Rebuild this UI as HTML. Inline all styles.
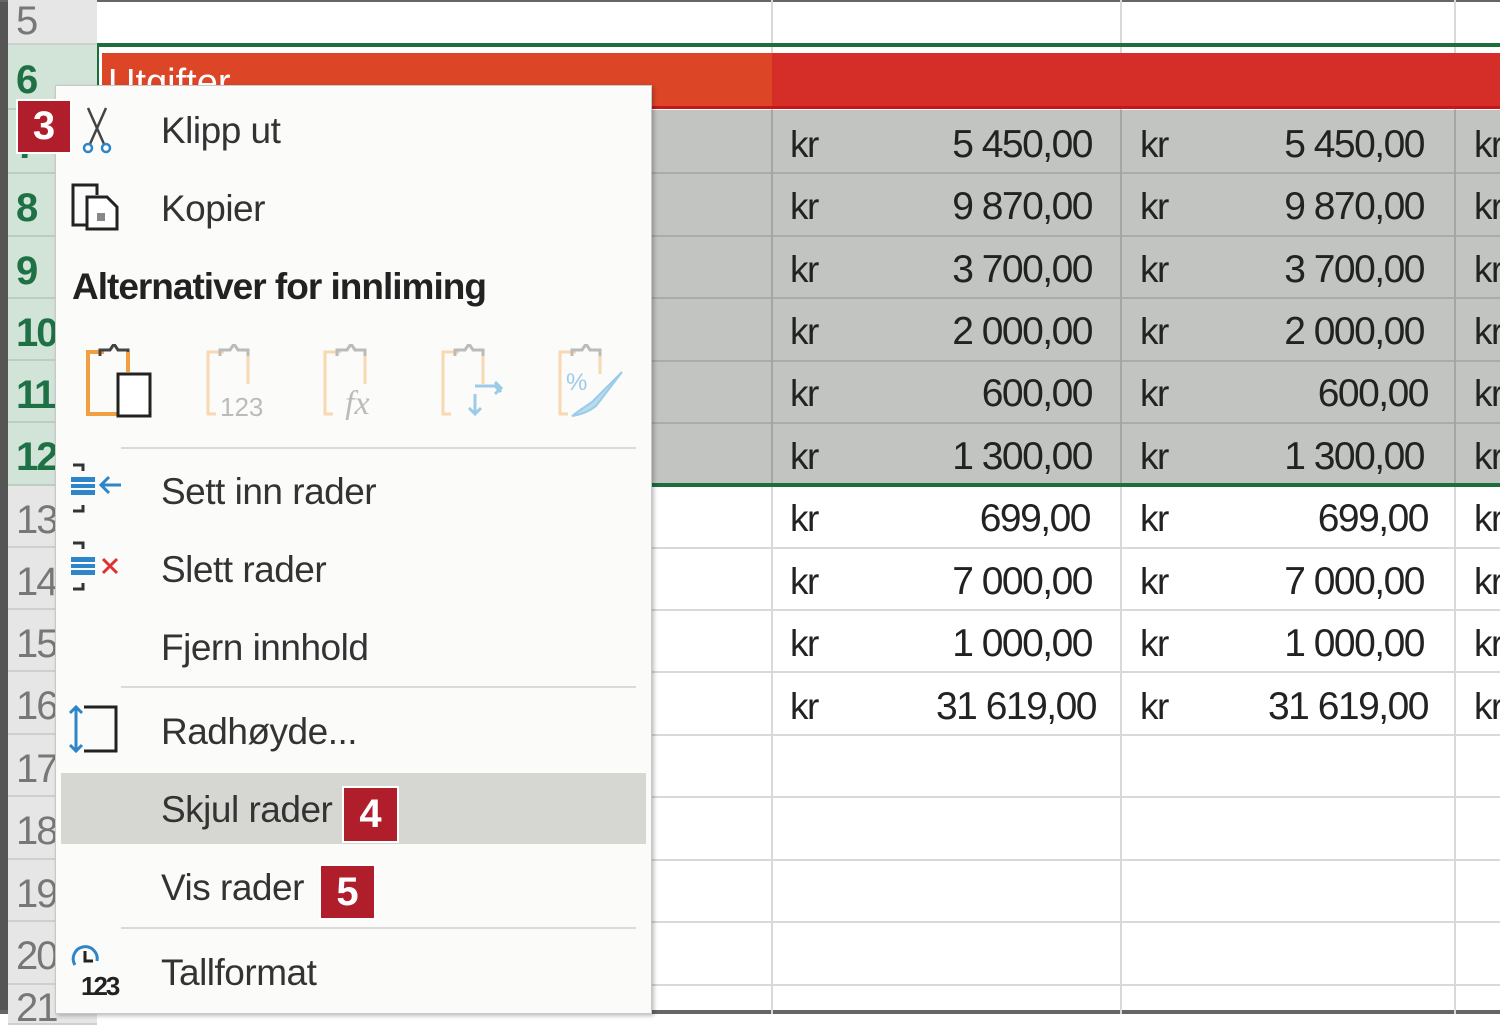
<!DOCTYPE html>
<html><head><meta charset="utf-8"><style>
*{margin:0;padding:0;box-sizing:border-box}
body{width:1500px;height:1014px;overflow:hidden;background:#fff;position:relative;font-family:"Liberation Sans",sans-serif}
.a{position:absolute}
.rh{position:absolute;left:8px;width:89px;background:#e6e6e6;border-bottom:2px solid #cfcfcf;color:#777;font-size:40px;padding-left:8px;padding-top:8px;display:flex;align-items:center;letter-spacing:-2px}
.rh.s{background:#d2e3d8;color:#1e7145;font-weight:bold;border-bottom-color:#b9cfc1}
.hl{position:absolute;left:97px;right:0;height:2px;background:#d9d9d9}
.vl{position:absolute;top:0;bottom:0;width:2px;background:#d9d9d9}
.kr{position:absolute;font-size:37px;color:#222;letter-spacing:-1.5px}
.num{position:absolute;font-size:39px;color:#222;letter-spacing:-1.5px;text-align:right}
.menu{position:absolute;left:55px;top:85px;width:597px;height:929px;background:#fbfbfa;border:1px solid #c8c8c8;box-shadow:2px 2px 4px rgba(0,0,0,.25)}
.mi{position:absolute;left:105px;font-size:37px;color:#333;letter-spacing:-0.5px}
.sep{position:absolute;left:65px;width:515px;height:2px;background:#dadada}
.badge{position:absolute;background:#b01e2b;color:#fff;font-weight:bold;font-size:40px;display:flex;align-items:center;justify-content:center;border:2px solid #fff}
</style></head><body>
<div class="a" style="left:0;top:0;width:8px;height:1014px;background:#555"></div>
<div class="a" style="left:0;top:0;width:1500px;height:2px;background:#666"></div>
<div class="a" style="left:0;top:1010px;width:1500px;height:4px;background:#666"></div>
<div class="vl" style="left:771px"></div>
<div class="vl" style="left:1120px"></div>
<div class="vl" style="left:1454px"></div>
<div class="hl" style="top:43px"></div>
<div class="hl" style="top:547px"></div>
<div class="hl" style="top:609px"></div>
<div class="hl" style="top:671px"></div>
<div class="hl" style="top:734px"></div>
<div class="hl" style="top:796px"></div>
<div class="hl" style="top:859px"></div>
<div class="hl" style="top:921px"></div>
<div class="hl" style="top:984px"></div>
<div class="a" style="left:97px;top:110px;width:1403px;height:375px;background:#c1c4c0"></div>
<div class="a" style="left:97px;top:172px;width:1403px;height:2px;background:#a9aca8"></div>
<div class="a" style="left:97px;top:235px;width:1403px;height:2px;background:#a9aca8"></div>
<div class="a" style="left:97px;top:297px;width:1403px;height:2px;background:#a9aca8"></div>
<div class="a" style="left:97px;top:360px;width:1403px;height:2px;background:#a9aca8"></div>
<div class="a" style="left:97px;top:422px;width:1403px;height:2px;background:#a9aca8"></div>
<div class="a" style="left:771px;top:110px;width:2px;height:375px;background:#a3a6a2"></div>
<div class="a" style="left:1120px;top:110px;width:2px;height:375px;background:#a3a6a2"></div>
<div class="a" style="left:1454px;top:110px;width:2px;height:375px;background:#a3a6a2"></div>
<div class="a" style="left:102px;top:53px;width:670px;height:55px;background:#dd4527"></div>
<div class="a" style="left:772px;top:53px;width:728px;height:55px;background:#d52d27"></div>
<div class="a" style="left:102px;top:106px;width:1398px;height:3px;background:#c81616"></div>
<div class="a" style="left:108px;top:62px;color:#fff;font-size:38px">Utgifter</div>
<div class="a" style="left:97px;top:43px;width:1403px;height:4px;background:#1e6e3c"></div>
<div class="a" style="left:97px;top:483px;width:1403px;height:4px;background:#1e6e3c"></div>
<div class="a" style="left:95px;top:43px;width:4px;height:444px;background:#1e6e3c"></div>
<div class="rh" style="top:0;height:45px;padding-top:0">5</div>
<div class="rh s" style="top:45px;height:65px">6</div>
<div class="rh s" style="top:110px;height:64px">7</div>
<div class="rh s" style="top:174px;height:63px">8</div>
<div class="rh s" style="top:237px;height:62px">9</div>
<div class="rh s" style="top:299px;height:62px">10</div>
<div class="rh s" style="top:361px;height:62px">11</div>
<div class="rh s" style="top:423px;height:63px">12</div>
<div class="rh" style="top:486px;height:62px">13</div>
<div class="rh" style="top:548px;height:62px">14</div>
<div class="rh" style="top:610px;height:62px">15</div>
<div class="rh" style="top:672px;height:63px">16</div>
<div class="rh" style="top:735px;height:62px">17</div>
<div class="rh" style="top:797px;height:63px">18</div>
<div class="rh" style="top:860px;height:62px">19</div>
<div class="rh" style="top:922px;height:63px">20</div>
<div class="rh" style="top:985px;height:40px">21</div>
<div class="kr" style="left:790px;top:124px">kr</div><div class="num" style="left:860px;width:232px;top:123px">5 450,00</div><div class="kr" style="left:1140px;top:124px">kr</div><div class="num" style="left:1190px;width:234px;top:123px">5 450,00</div><div class="kr" style="left:1474px;top:124px">kr</div>
<div class="kr" style="left:790px;top:186px">kr</div><div class="num" style="left:860px;width:232px;top:185px">9 870,00</div><div class="kr" style="left:1140px;top:186px">kr</div><div class="num" style="left:1190px;width:234px;top:185px">9 870,00</div><div class="kr" style="left:1474px;top:186px">kr</div>
<div class="kr" style="left:790px;top:249px">kr</div><div class="num" style="left:860px;width:232px;top:248px">3 700,00</div><div class="kr" style="left:1140px;top:249px">kr</div><div class="num" style="left:1190px;width:234px;top:248px">3 700,00</div><div class="kr" style="left:1474px;top:249px">kr</div>
<div class="kr" style="left:790px;top:311px">kr</div><div class="num" style="left:860px;width:232px;top:310px">2 000,00</div><div class="kr" style="left:1140px;top:311px">kr</div><div class="num" style="left:1190px;width:234px;top:310px">2 000,00</div><div class="kr" style="left:1474px;top:311px">kr</div>
<div class="kr" style="left:790px;top:373px">kr</div><div class="num" style="left:860px;width:232px;top:372px">600,00</div><div class="kr" style="left:1140px;top:373px">kr</div><div class="num" style="left:1190px;width:238px;top:372px">600,00</div><div class="kr" style="left:1474px;top:373px">kr</div>
<div class="kr" style="left:790px;top:436px">kr</div><div class="num" style="left:860px;width:232px;top:435px">1 300,00</div><div class="kr" style="left:1140px;top:436px">kr</div><div class="num" style="left:1190px;width:234px;top:435px">1 300,00</div><div class="kr" style="left:1474px;top:436px">kr</div>
<div class="kr" style="left:790px;top:498px">kr</div><div class="num" style="left:860px;width:230px;top:497px">699,00</div><div class="kr" style="left:1140px;top:498px">kr</div><div class="num" style="left:1190px;width:238px;top:497px">699,00</div><div class="kr" style="left:1474px;top:498px">kr</div>
<div class="kr" style="left:790px;top:561px">kr</div><div class="num" style="left:860px;width:232px;top:560px">7 000,00</div><div class="kr" style="left:1140px;top:561px">kr</div><div class="num" style="left:1190px;width:234px;top:560px">7 000,00</div><div class="kr" style="left:1474px;top:561px">kr</div>
<div class="kr" style="left:790px;top:623px">kr</div><div class="num" style="left:860px;width:232px;top:622px">1 000,00</div><div class="kr" style="left:1140px;top:623px">kr</div><div class="num" style="left:1190px;width:234px;top:622px">1 000,00</div><div class="kr" style="left:1474px;top:623px">kr</div>
<div class="kr" style="left:790px;top:686px">kr</div><div class="num" style="left:860px;width:236px;top:685px">31 619,00</div><div class="kr" style="left:1140px;top:686px">kr</div><div class="num" style="left:1190px;width:238px;top:685px">31 619,00</div><div class="kr" style="left:1474px;top:686px">kr</div>

<div class="menu">
  <div class="a" style="left:5px;top:687px;width:585px;height:71px;background:#d6d6d2"></div>
  <svg class="a" style="left:22px;top:20px" width="40" height="50" viewBox="0 0 40 50"><path d="M10 2 L26 38 M28 2 L12 38" stroke="#444" stroke-width="2.5" fill="none"/><circle cx="10" cy="42" r="4" stroke="#2e86c8" stroke-width="2.5" fill="none"/><circle cx="28" cy="42" r="4" stroke="#2e86c8" stroke-width="2.5" fill="none"/></svg>
  <div class="mi" style="top:24px">Klipp ut</div>
  <svg class="a" style="left:15px;top:95px" width="55" height="55" viewBox="0 0 55 55"><path d="M20 4 H2 V44 H20" stroke="#222" stroke-width="3" fill="none"/><path d="M20 4 H26 V14" stroke="#222" stroke-width="3" fill="none"/><path d="M16 16 H36 L46 26 V48 H16 Z" stroke="#222" stroke-width="3" fill="#fff"/><rect x="26" y="32" width="8" height="8" fill="#888"/></svg>
  <div class="mi" style="top:102px">Kopier</div>
  <div class="mi" style="left:16px;top:180px;font-weight:bold;color:#222;letter-spacing:-1px">Alternativer for innliming</div>
  <svg class="a" style="left:28px;top:258px" width="70" height="76" viewBox="0 0 70 76"><path d="M20 8 H4 V70 H36" stroke="#f0a040" stroke-width="4" fill="none"/><path d="M16 12 V6 H26 L30 0 L34 6 H44 V12" stroke="#444" stroke-width="3" fill="none"/><path d="M44 8 V28" stroke="#f0a040" stroke-width="4"/><rect x="34" y="30" width="32" height="42" stroke="#222" stroke-width="3" fill="#fff"/></svg>
  <svg class="a" style="left:148px;top:258px" width="70" height="76" viewBox="0 0 70 76"><path d="M20 8 H4 V70 H12 M44 8 V40" stroke="#f7d8b0" stroke-width="3" fill="none"/><path d="M16 12 V6 H26 L30 0 L34 6 H44 V12" stroke="#bbb" stroke-width="3" fill="none"/><text x="16" y="72" font-size="26" fill="#bbb" font-family="Liberation Sans">123</text></svg>
  <svg class="a" style="left:265px;top:258px" width="70" height="76" viewBox="0 0 70 76"><path d="M20 8 H4 V70 H12 M44 8 V40" stroke="#f7d8b0" stroke-width="3" fill="none"/><path d="M16 12 V6 H26 L30 0 L34 6 H44 V12" stroke="#bbb" stroke-width="3" fill="none"/><text x="24" y="70" font-size="34" font-style="italic" fill="#bbb" font-family="Liberation Serif">fx</text></svg>
  <svg class="a" style="left:383px;top:258px" width="70" height="76" viewBox="0 0 70 76"><path d="M20 8 H4 V70 H12 M44 8 V40" stroke="#f7d8b0" stroke-width="3" fill="none"/><path d="M16 12 V6 H26 L30 0 L34 6 H44 V12" stroke="#bbb" stroke-width="3" fill="none"/><path d="M36 42 L56 42 L62 48 M56 38 L62 44 L56 50 M36 50 L36 70 M30 64 L36 70 L42 64" stroke="#9ccbe8" stroke-width="3" fill="none"/></svg>
  <svg class="a" style="left:500px;top:258px" width="75" height="76" viewBox="0 0 75 76"><path d="M20 8 H4 V70 H12 M44 8 V30" stroke="#f7d8b0" stroke-width="3" fill="none"/><path d="M16 12 V6 H26 L30 0 L34 6 H44 V12" stroke="#bbb" stroke-width="3" fill="none"/><text x="10" y="46" font-size="24" fill="#9ccbe8" font-family="Liberation Sans">%</text><path d="M66 28 L36 58 Q24 66 16 72 Q30 70 40 62 Z" fill="#b8dbee" stroke="#9ccbe8" stroke-width="2"/></svg>
  <div class="sep" style="top:361px"></div>
  <svg class="a" style="left:13px;top:375px" width="60" height="55" viewBox="0 0 60 55"><path d="M4 4 H14 V10 M4 50 H14 V44" stroke="#333" stroke-width="3" fill="none"/><rect x="2" y="16" width="24" height="18" fill="#2e86c8"/><path d="M2 22 H26 M2 28 H26" stroke="#fff" stroke-width="2"/><path d="M52 24 H32 M40 16 L32 24 L40 32" stroke="#2e86c8" stroke-width="3" fill="none"/></svg>
  <div class="mi" style="top:385px">Sett inn rader</div>
  <svg class="a" style="left:13px;top:453px" width="60" height="55" viewBox="0 0 60 55"><path d="M4 4 H14 V10 M4 50 H14 V44" stroke="#333" stroke-width="3" fill="none"/><rect x="2" y="18" width="24" height="18" fill="#2e86c8"/><path d="M2 24 H26 M2 30 H26" stroke="#fff" stroke-width="2"/><path d="M34 20 L48 34 M48 20 L34 34" stroke="#e03030" stroke-width="3"/></svg>
  <div class="mi" style="top:463px">Slett rader</div>
  <div class="mi" style="top:541px">Fjern innhold</div>
  <div class="sep" style="top:600px"></div>
  <svg class="a" style="left:12px;top:615px" width="55" height="60" viewBox="0 0 55 60"><path d="M16 6 H48 V50 H16" stroke="#222" stroke-width="3" fill="none"/><path d="M8 6 V50 M2 12 L8 6 L14 12 M2 44 L8 50 L14 44" stroke="#2e86c8" stroke-width="3" fill="none"/></svg>
  <div class="mi" style="top:625px">Radhøyde...</div>
  <div class="mi" style="top:703px">Skjul rader</div>
  <div class="mi" style="top:781px">Vis rader</div>
  <div class="sep" style="top:841px"></div>
  <svg class="a" style="left:13px;top:855px" width="60" height="60" viewBox="0 0 60 60"><path d="M6 24 A12 12 0 1 1 28 20" stroke="#2e86c8" stroke-width="3" fill="none"/><path d="M16 10 V20 H24" stroke="#222" stroke-width="3" fill="none"/><text x="12" y="54" font-size="26" font-weight="bold" fill="#222" font-family="Liberation Sans" letter-spacing="-2">123</text></svg>
  <div class="mi" style="top:866px">Tallformat</div>
</div>
<div class="badge" style="left:16px;top:99px;width:56px;height:55px">3</div>
<div class="badge" style="left:342px;top:786px;width:57px;height:57px">4</div>
<div class="badge" style="left:319px;top:864px;width:57px;height:56px">5</div>
</body></html>
